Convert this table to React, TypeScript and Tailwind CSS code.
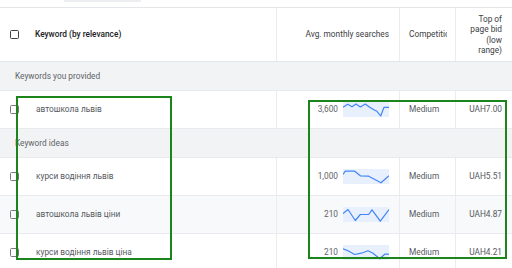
import React from "react";

type Pt = [number, number];

function Spark({ pts }: { pts: Pt[] }) {
  const line = pts.map((p) => `${p[0]},${p[1]}`).join(" ");
  return (
    <svg width="46" height="15" viewBox="0 0 46 15" className="block shrink-0">
      <rect x="0" y="0" width="46" height="15" fill="#e8f0fe" />
      <polyline points={line} fill="none" stroke="#4285f4" strokeWidth="1.2" strokeLinejoin="round" />
    </svg>
  );
}

function Box({ dark }: { dark?: boolean }) {
  return (
    <span
      className={`block w-[9px] h-[9px] rounded-[1.5px] border-[1.5px] shrink-0 ${
        dark ? "border-[#3c4043]" : "border-[#75797e]"
      }`}
    />
  );
}

const rows: { kw: string; num: string; pts: Pt[]; bid: string; bg?: string }[] = [
  {
    kw: "автошкола львів",
    num: "3,600",
    pts: [
      [0, 5.3], [4.7, 2.3], [9, 4.7], [13, 2], [17.3, 5], [22.3, 2], [26.7, 5.3],
      [31.3, 8], [34, 9.3], [37.7, 14], [41, 5.3], [46, 5.3],
    ],
    bid: "UAH7.00",
  },
  {
    kw: "курси водіння львів",
    num: "1,000",
    pts: [[0, 5.5], [2.3, 2.2], [11.7, 2.2], [17.3, 6.8], [25.7, 7.2], [38, 13.8], [46, 6.8]],
    bid: "UAH5.51",
  },
  {
    kw: "автошкола львів ціни",
    num: "210",
    pts: [[0, 6.5], [5, 2.5], [12.3, 13.5], [17.3, 7.5], [25.7, 7.5], [29, 2.8], [37.3, 14.2], [46, 2.5]],
    bid: "UAH4.87",
    bg: "bg-[#f8f9fa]",
  },
  {
    kw: "курси водіння львів ціна",
    num: "210",
    pts: [[0, 3.8], [5, 5.8], [11.7, 9.5], [18.3, 8.2], [25, 5.8], [30, 8.2], [36.7, 13.8], [41.7, 9.2], [46, 9.2]],
    bid: "UAH4.21",
  },
];

function Row({ r }: { r: (typeof rows)[number] }) {
  return (
    <div className={`grid grid-cols-[277px_123px_56px_56px] h-[38px] border-b border-[#e8eaed] ${r.bg ?? "bg-white"}`}>
      <div className="flex items-center pl-[10px] gap-[17px] border-r border-[#ececec]">
        <Box />
        <span className="text-[8.3px] text-[#55595e]">{r.kw}</span>
      </div>
      <div className="flex items-center justify-end pr-[10px] gap-[5px] border-r border-[#ececec]">
        <span className="text-[8.3px] text-[#5f6368]">{r.num}</span>
        <Spark pts={r.pts} />
      </div>
      <div className="flex items-center pl-[9px] border-r border-[#ececec]">
        <span className="text-[8.3px] text-[#55595e]">Medium</span>
      </div>
      <div className="flex items-center justify-end pr-[10px]">
        <span className="text-[8.3px] text-[#55595e]">{r.bid}</span>
      </div>
    </div>
  );
}

function Section({ title }: { title: string }) {
  return (
    <div className="h-[29px] bg-[#f1f3f4] border-b border-[#e8eaed] flex items-center pl-[15px]">
      <span className="text-[8.3px] text-[#5f6368]">{title}</span>
    </div>
  );
}

export default function App() {
  return (
    <div
      className="relative w-[512px] h-[268px] overflow-hidden bg-white"
      style={{ fontFamily: "Roboto, 'Noto Sans', sans-serif" }}
    >
      <div className="h-[7px] pl-[64px]">
        <div className="w-[77px] h-[2px] bg-[#eceef0]" />
      </div>
      <div className="grid grid-cols-[277px_123px_56px_56px] h-[55px] border-t border-b border-[#e3e5e8]">
        <div className="flex items-center pl-[10px] gap-[16px] border-r border-[#ececec]">
          <Box dark />
          <span className="text-[8.3px] font-medium text-[#202124]">Keyword (by relevance)</span>
        </div>
        <div className="flex items-center justify-end pr-[10px] border-r border-[#ececec]">
          <span className="text-[8.3px] text-[#3c4043]">Avg. monthly searches</span>
        </div>
        <div className="flex items-center pl-[9px] pr-[8px] border-r border-[#ececec] overflow-hidden">
          <span className="text-[8.3px] text-[#3c4043] whitespace-nowrap overflow-hidden">Competition</span>
        </div>
        <div className="flex items-center justify-end pr-[10px]">
          <span className="text-[8.3px] leading-[10.5px] text-[#3c4043] text-right">
            Top of
            <br />
            page bid
            <br />
            (low
            <br />
            range)
          </span>
        </div>
      </div>
      <Section title="Keywords you provided" />
      <Row r={rows[0]} />
      <Section title="Keyword ideas" />
      <Row r={rows[1]} />
      <Row r={rows[2]} />
      <Row r={rows[3]} />

      <div className="absolute left-[16px] top-[96px] w-[156px] h-[164px] border-2 border-[#1b841b]" />
      <div className="absolute left-[308px] top-[100px] w-[199px] h-[159px] border-2 border-[#1b841b]" />
    </div>
  );
}
